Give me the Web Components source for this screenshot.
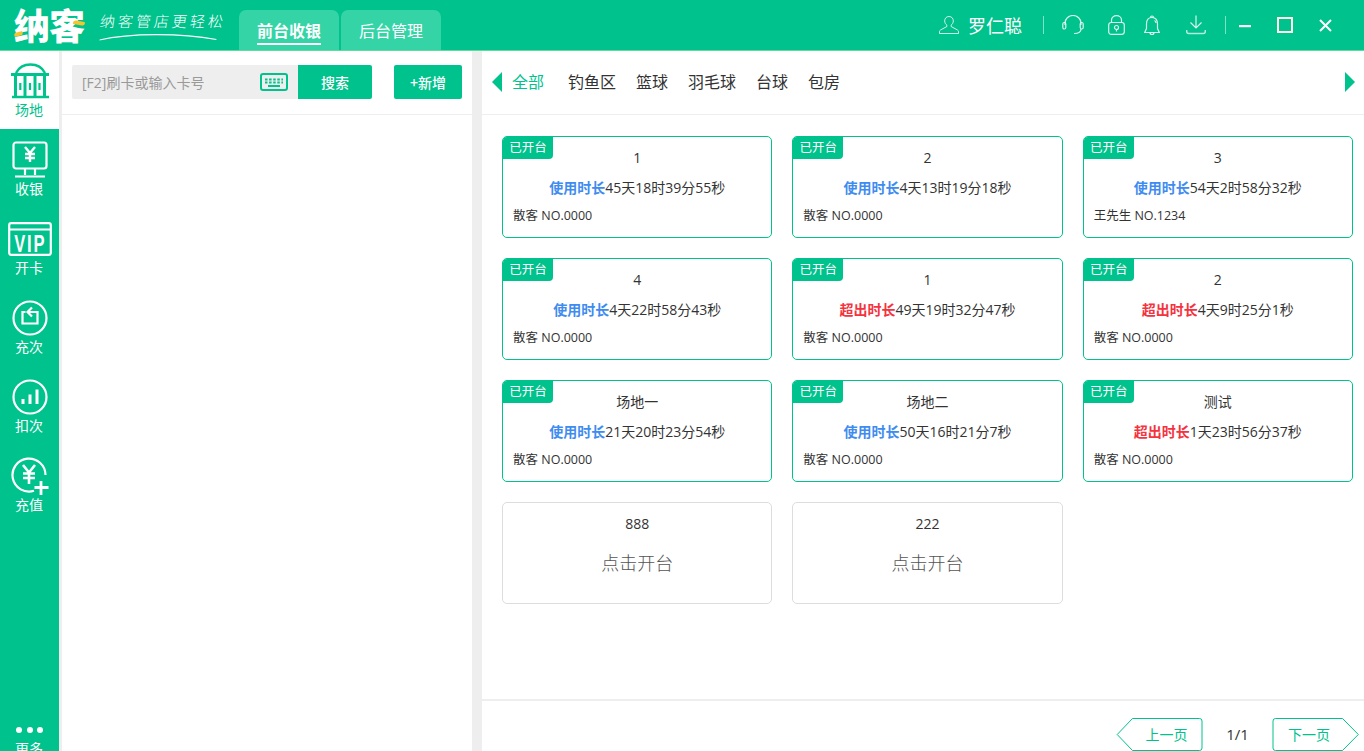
<!DOCTYPE html>
<html lang="zh"><head><meta charset="utf-8"><title>纳客</title>
<style>
html,body{margin:0;height:100%;overflow:hidden;background:#fff}
body{font-family:"Noto Sans CJK SC","Liberation Sans",sans-serif;color:#333}
</style></head><body>
<nk-app></nk-app>
<script>
const F='"Open Sans","Noto Sans CJK SC",sans-serif';
function def(name,css,html){
  class C extends HTMLElement{
    constructor(){super();const r=this.attachShadow({mode:'open'});
      r.innerHTML='<style>'+css+'</style>'+(typeof html==='function'?html(this):html);}
    connectedCallback(){
      const r=this.shadowRoot;
      if(typeof html==='function'){r.innerHTML='<style>'+css+'</style>'+html(this);}
    }
  }
  customElements.define(name,C);
}
const ic={
 user:'<svg width="20" height="20" viewBox="0 0 20 20" fill="none" stroke="#fff" stroke-opacity=".8"><path d="M10 1.5c-2.8 0-4.3 2-4.3 4.4 0 2 1 3.4 2.2 4.3v1.3L1.5 15c-.7.4-1 1-1 1.7v1.8h19v-1.8c0-.7-.3-1.3-1-1.7l-6.4-3.5v-1.3c1.200-.9 2.200-2.300 2.200-4.300 0-2.400-1.500-4.400-4.300-4.400z"/></svg>',
 head:'<svg width="22" height="20" viewBox="0 0 22 20" fill="none" stroke="#fff" stroke-opacity=".85" stroke-width="1.200"><path d="M3 10V8a8 7.500 0 0 1 16 0v2"/><rect x=".8" y="7.500" width="3" height="6.500" rx="1.500"/><rect x="18.200" y="7.500" width="3" height="6.500" rx="1.500"/><path d="M19 14c0 3-3 4.500-7 4.500"/></svg>',
 lock:'<svg width="17" height="20" viewBox="0 0 17 20" fill="none" stroke="#fff" stroke-opacity=".85" stroke-width="1.200"><rect x=".7" y="7.500" width="15.600" height="11.800" rx="2.500"/><path d="M3.500 7.500V5a5 4.400 0 0 1 10 0v2.500"/><circle cx="8.500" cy="12.500" r="2"/><path d="M8.500 14.500v2"/></svg>',
 bell:'<svg width="16" height="21" viewBox="0 0 16 21" fill="none" stroke="#fff" stroke-opacity=".85" stroke-width="1.200"><path d="M8 2.500C4 2.500 2.500 5.500 2.500 9v4.500L.7 17.500h14.600l-1.800-4V9C13.500 5.500 12 2.500 8 2.500z"/><path d="M6.500 2.500a1.500 1.500 0 0 1 3 0M6 17.500a2 2 0 0 0 4 0M10.500 5.500c1 .6 1.500 1.500 1.500 2.500"/></svg>',
 down:'<svg width="20" height="20" viewBox="0 0 20 20" fill="none" stroke="#fff" stroke-opacity=".85" stroke-width="1.200"><path d="M10 .5v12.500M4.500 7.500l5.500 5.500 5.500-5.500"/><path d="M.7 15v1.500a2 2 0 0 0 2 2h14.600a2 2 0 0 0 2-2V15" stroke-opacity=".7" stroke-width="1.500"/></svg>',
 min:'<svg width="13" height="13" viewBox="0 0 13 13"><rect y="6" width="12" height="2.200" fill="#fff"/></svg>',
 max:'<svg width="16" height="16" viewBox="0 0 16 16" fill="none" stroke="#fffbe8" stroke-width="2"><rect x="1" y="1" width="14" height="14"/></svg>',
 close:'<svg width="13" height="13" viewBox="0 0 13 13" stroke="#fff" stroke-width="2"><path d="M1 1l11 11M12 1L1 12"/></svg>',
 kb:'<svg width="28" height="18" viewBox="0 0 28 18" fill="none"><rect x="1" y="1" width="26" height="16" rx="2" stroke="#00c28c" stroke-width="2"/><path d="M5 6.500h18M5 9.500h18" stroke="#00c28c" stroke-width="2" stroke-dasharray="2.500 1.600"/><path d="M8 13h12" stroke="#00c28c" stroke-width="2"/></svg>',
 court:'<svg width="38" height="38" viewBox="0 0 38 38" fill="none" stroke="#00c28c"><path d="M5 11C8 5 13 2.500 19.500 2.500S31 5 34 11" stroke-width="2.400"/><path d="M0 12.500h38" stroke-width="3"/><path d="M4.500 13v21M14 13v21M24 13v21M33.500 13v21" stroke-width="3"/><path d="M9.300 21v7M19 21v7M28.500 21v7" stroke-width="2.200"/><path d="M1 35h37" stroke-width="2.600"/></svg>',
 cash:'<svg width="36" height="38" viewBox="0 0 36 38" fill="none" stroke="#fff" stroke-width="2.200"><rect x="1.500" y="1.500" width="33" height="26" rx="2.500"/><path d="M13 28v6M23 28v6M3 35.500h30"/><path d="M13 6l5 6 5-6M18 12v9M13 13h10M13 17h10" stroke-width="2.400"/></svg>',
 vip:'<svg width="44" height="34" viewBox="0 0 44 34" fill="none" stroke="#fff" stroke-width="2.200"><rect x="1.200" y="1.200" width="41.600" height="31.600" rx="2"/><path d="M1.200 7.500h41.600"/></svg>',
 recharge:'<svg width="36" height="36" viewBox="0 0 36 36" fill="none" stroke="#fff" stroke-width="2.200"><circle cx="18" cy="18" r="16.500"/><path d="M13.500 12H10.500V23.500H25.500V12H16"/><path d="M20 7.500L15.500 12l4.500 4.500"/></svg>',
 bars:'<svg width="36" height="36" viewBox="0 0 36 36" fill="none" stroke="#fff" stroke-width="2.200"><circle cx="18" cy="18" r="16.500"/><path d="M11 20v5M18 15.500v9.500M25 10.500v14.500" stroke-width="3"/></svg>',
 yen:'<svg width="38" height="38" viewBox="0 0 38 38" fill="none" stroke="#fff" stroke-width="2.200"><path d="M23 33.800A16.500 16.500 0 1 1 34.500 18"/><path d="M12 8l6 7.500L24 8M18 15.500V27M12 16.500h12M12 21h12" stroke-width="2.600"/><path d="M30 24v14M23.500 30.500h14" stroke-width="2.800"/></svg>'
};

def('nk-icon-btn',':host{display:inline-flex;align-items:center;justify-content:center}',e=>ic[e.getAttribute('i')]);

def('nk-logo',`:host{display:flex;align-items:center;height:50px;color:#fff;width:239px;box-sizing:border-box;padding-left:14px;flex:none}
.b{font:900 36px/40px "Noto Sans CJK SC",sans-serif;letter-spacing:-1px;position:relative;width:74px;white-space:nowrap;transform:translateY(-1px)}
.y1,.y2{position:absolute;background:#f6c42f;border-radius:3px 1px}
.y1{left:0;top:28px;width:9px;height:4px;transform:rotate(-14deg)}
.y2{left:59px;top:17px;width:12px;height:3.500px;transform:rotate(10deg)}
.s{margin-left:12px;position:relative;font:300 15px/20px "Noto Sans CJK SC",sans-serif;letter-spacing:3px;white-space:nowrap;transform:translateY(-4px) skewX(-8deg)}
svg{position:absolute;left:2px;top:22px}`,
`<div class="b">纳客<i class="y1"></i><i class="y2"></i></div><div class="s">纳客管店更轻松<svg width="118" height="8" viewBox="0 0 118 8" fill="none"><path d="M0 7C30 0 80 0 117 6.500" stroke="#fff" stroke-width="1.200"/></svg></div>`);

def('nk-top-tab',`:host{display:flex;width:100px;height:40px;box-sizing:border-box;background:#34d4a6;border-radius:7px 7px 0 0;justify-content:center;color:#fff;font:400 16px/40px "Noto Sans CJK SC",sans-serif}
:host([active]){font-weight:700}
span{display:block;height:34px}
:host([active]) span{border-bottom:2px solid #fff;height:33px}`,'<span><slot></slot></span>');

def('nk-header',`:host{display:flex;height:51px;box-sizing:border-box;background:#00c28c;border-bottom:1px solid #5fdc9b;flex:none;color:#fff;position:relative}
.tabs{display:flex;gap:2px;align-self:flex-end;height:40px}
.right{margin-left:auto;display:flex;align-items:center;height:50px}
.name{font:400 18px/20px "Noto Sans CJK SC",sans-serif;margin:0 20px 0 9px;width:55px;white-space:nowrap}
.sep{width:1px;height:18px;background:rgba(255,255,255,.5)}`,
`<nk-logo></nk-logo><div class="tabs"><nk-top-tab active>前台收银</nk-top-tab><nk-top-tab>后台管理</nk-top-tab></div>
<div class="right">
<nk-icon-btn i="user"></nk-icon-btn><span class="name">罗仁聪</span><span class="sep"></span>
<nk-icon-btn i="head" style="margin-left:18px"></nk-icon-btn>
<nk-icon-btn i="lock" style="margin-left:24px"></nk-icon-btn>
<nk-icon-btn i="bell" style="margin-left:19px"></nk-icon-btn>
<nk-icon-btn i="down" style="margin-left:26px"></nk-icon-btn>
<span class="sep" style="margin-left:19px"></span>
<nk-icon-btn i="min" style="margin-left:13px"></nk-icon-btn>
<nk-icon-btn i="max" style="margin-left:25px"></nk-icon-btn>
<nk-icon-btn i="close" style="margin-left:26px;margin-right:32px"></nk-icon-btn>
</div>`);

def('nk-side-item',`:host{display:flex;flex-direction:column;align-items:center;width:59px;height:79px;box-sizing:border-box;padding-top:12px;color:#fff;flex:none;font:400 14px/18px "Noto Sans CJK SC",sans-serif}
:host([active]){background:#fff;color:#00c28c;height:78px;padding-top:11px}
.i{height:38px;display:flex;align-items:center;justify-content:center;position:relative}
.vip{position:absolute;left:0;right:0;top:12px;text-align:center;font:700 23px/24px "Liberation Sans",sans-serif;letter-spacing:2.500px;color:#fff;transform:scaleX(.72)}
.l{display:block;padding-right:1px}`,
e=>`<div class="i">${ic[e.getAttribute('i')]}${e.getAttribute('i')==='vip'?'<span class="vip">VIP</span>':''}</div><span class="l"><slot></slot></span>`);

def('nk-sidebar',`:host{display:flex;flex-direction:column;width:59px;background:#00c28c;flex:none;height:700px;position:relative;overflow:hidden}
.spacer{flex:1}
.more{display:flex;flex-direction:column;align-items:center;color:#fff;font:400 14px/18px "Noto Sans CJK SC",sans-serif;height:27px;flex:none}
.more span{padding-right:1px}
.dots{display:flex;gap:4.600px;height:9px;margin-bottom:6px}.dots i{width:6px;height:6px;border-radius:50%;background:#fff;display:block;margin-top:3px}`,
`<nk-side-item active i="court">场地</nk-side-item>
<nk-side-item i="cash">收银</nk-side-item>
<nk-side-item i="vip">开卡</nk-side-item>
<nk-side-item i="recharge">充次</nk-side-item>
<nk-side-item i="bars">扣次</nk-side-item>
<nk-side-item i="yen">充值</nk-side-item>
<div class="spacer"></div>
<div class="more"><div class="dots"><i></i><i></i><i></i></div><span>更多</span></div>`);

def('nk-search',`:host{display:flex;align-items:center;height:64px;box-sizing:border-box;padding:14px 10px 15px 10px;border-bottom:1px solid #eee;flex:none}
.inp{display:flex;align-items:center;width:226px;height:34px;background:#eee;box-sizing:border-box;padding:0 10px;color:#999;font:400 14px/34px ${F};border-radius:2px 0 0 2px}
.inp span{flex:1;white-space:nowrap;padding-top:1px}
.btn{display:flex;align-items:center;justify-content:center;height:34px;background:#00c28c;color:#fff;font:500 14px/34px "Noto Sans CJK SC",sans-serif;border-radius:0 2px 2px 0;width:74px}
.add{width:68px;margin-left:22px;border-radius:2px}`,
`<div class="inp"><span>[F2]刷卡或输入卡号</span>${ic.kb}</div><div class="btn">搜索</div><div class="btn add">+新增</div>`);

def('nk-left',`:host{display:flex;flex-direction:column;width:410px;flex:none;background:#fff}`,'<nk-search></nk-search>');

def('nk-cat',`:host{display:block;font:400 16px/24px "Noto Sans CJK SC",sans-serif;color:#333;margin-right:20px;white-space:nowrap}
:host([active]){color:#00c28c;margin-right:24px}`,'<slot></slot>');

def('nk-cats',`:host{display:flex;align-items:center;height:64px;box-sizing:border-box;border-bottom:1px solid #eee;flex:none;padding:0 9px 3px 10px}
.t{width:0;height:0;border-style:solid;border-width:10px 0 10px 10px;border-color:transparent transparent transparent #00c28c;position:relative;top:1px}
.t.l{border-width:10px 10px 10px 0;border-color:transparent #00c28c transparent transparent;margin-right:10px}
.sp{flex:1}`,
`<span class="t l"></span><nk-cat active>全部</nk-cat><nk-cat>钓鱼区</nk-cat><nk-cat>篮球</nk-cat><nk-cat>羽毛球</nk-cat><nk-cat>台球</nk-cat><nk-cat>包房</nk-cat><span class="sp"></span><span class="t"></span>`);

def('nk-card',`:host{display:block;height:102px;box-sizing:border-box;border:1px solid #00c28c;border-radius:5px;position:relative;text-align:center;color:#333;font:400 14px/22px ${F};background:#fff}
:host([idle]){border-color:#ddd}
.badge{position:absolute;left:0;top:0;width:50px;height:22px;background:#00c28c;color:#fff;font:400 12.500px/20px "Noto Sans CJK SC",sans-serif;border-radius:4px 0 4px 0;text-align:center}
.t{margin-top:10px;height:22px}
.d{margin-top:7px;height:22px;white-space:nowrap}
.d b{font-weight:700;font-family:"Noto Sans CJK SC",sans-serif}
.d b.u{color:#3f8cf0}.d b.o{color:#f5333f}
.c{margin-top:7px;padding-left:10px;text-align:left;font-size:12.500px;height:22px;white-space:nowrap}
.open{margin-top:14px;font-size:18px;line-height:26px;color:#555;font-weight:300;font-family:"Noto Sans CJK SC",sans-serif}`,
e=>{
 const t=e.getAttribute('t');
 if(e.hasAttribute('idle'))return `<div class="t">${t}</div><div class="open">点击开台</div>`;
 const k=e.getAttribute('k');
 return `<div class="badge">已开台</div><div class="t">${t}</div><div class="d"><b class="${k}">${k==='u'?'使用时长':'超出时长'}</b>${e.getAttribute('d')}</div><div class="c">${e.getAttribute('c')||'散客 NO.0000'}</div>`;
});

def('nk-grid',`:host{display:grid;grid-template-columns:repeat(3,270.330px);column-gap:20px;row-gap:20px;padding:21px 0 0 20px;flex:1;align-content:start}`,
`<nk-card t="1" k="u" d="45天18时39分55秒"></nk-card>
<nk-card t="2" k="u" d="4天13时19分18秒"></nk-card>
<nk-card t="3" k="u" d="54天2时58分32秒" c="王先生 NO.1234"></nk-card>
<nk-card t="4" k="u" d="4天22时58分43秒"></nk-card>
<nk-card t="1" k="o" d="49天19时32分47秒"></nk-card>
<nk-card t="2" k="o" d="4天9时25分1秒"></nk-card>
<nk-card t="场地一" k="u" d="21天20时23分54秒"></nk-card>
<nk-card t="场地二" k="u" d="50天16时21分7秒"></nk-card>
<nk-card t="测试" k="o" d="1天23时56分37秒"></nk-card>
<nk-card t="888" idle></nk-card>
<nk-card t="222" idle></nk-card>`);

def('nk-page-btn',`:host{display:block;position:relative;width:87px;height:33px;color:#00c28c;font:400 14px/33px "Noto Sans CJK SC",sans-serif;box-sizing:border-box}
svg{position:absolute;left:0;top:0}
span{display:block;text-align:center;position:relative}
:host([dir=prev]) span{padding-left:14px}
:host([dir=next]) span{padding-right:13px}`,
e=>e.getAttribute('dir')==='prev'
?`<svg width="87" height="33" fill="none" stroke="#00c28c"><path d="M1.200 16.500L16.500.5H83.500a2.500 2.500 0 0 1 2.500 2.500V30a2.500 2.500 0 0 1-2.500 2.500H16.500z"/></svg><span><slot></slot></span>`
:`<svg width="87" height="33" fill="none" stroke="#00c28c"><path d="M86.300 16.500L70.500.5H3.500A2.500 2.500 0 0 0 1 3V30a2.500 2.500 0 0 0 2.500 2.500H70.500z"/></svg><span><slot></slot></span>`);

def('nk-pager',`:host{display:flex;justify-content:flex-end;align-items:flex-start;flex:none;height:52px;box-sizing:border-box;border-top:2px solid #eee;padding:17px 5px 0 0}
.n{width:69px;text-align:center;font:400 15px/32px ${F};color:#333}`,
`<nk-page-btn dir="prev">上一页</nk-page-btn><span class="n">1/1</span><nk-page-btn dir="next">下一页</nk-page-btn>`);

def('nk-right',`:host{display:flex;flex-direction:column;flex:1;min-width:0;background:#fff;border-left:10px solid #eee}`,
`<nk-cats></nk-cats><nk-grid></nk-grid><nk-pager></nk-pager>`);

def('nk-app',`:host{display:flex;flex-direction:column;width:1364px;height:751px;overflow:hidden}
.m{display:flex;flex:1;min-height:0}
.g{width:3px;background:#eee;flex:none}`,
`<nk-header></nk-header><div class="m"><nk-sidebar></nk-sidebar><div class="g"></div><nk-left></nk-left><nk-right></nk-right></div>`);
</script>
</body></html>
